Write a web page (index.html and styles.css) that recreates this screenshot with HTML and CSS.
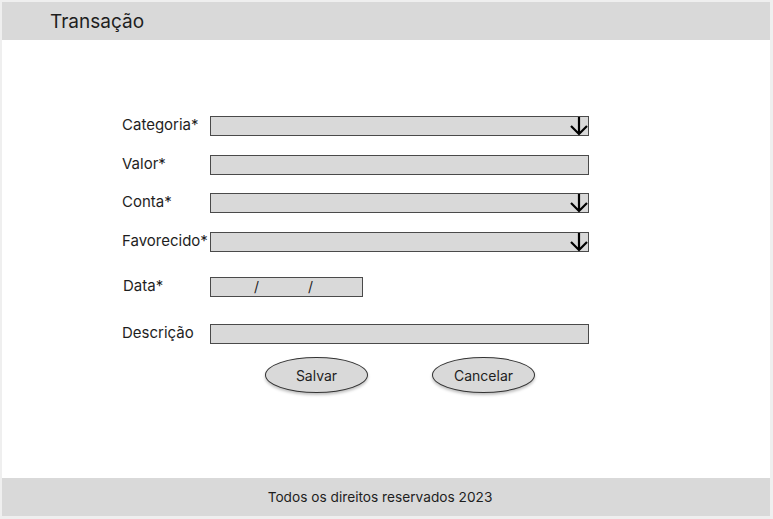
FILE: index.html
```html
<!DOCTYPE html>
<html lang="pt-BR">
<head>
    <meta charset="UTF-8">
    <meta name="viewport" content="width=device-width, initial-scale=1.0">
    <title>Transação</title>
    <link rel="stylesheet" href="styles.css">
</head>
<body>
    <div class="page">
        <!-- Header -->
        <div class="header">
            <h1>Transação</h1>
        </div>

        <!-- Form -->
        <div class="main-content">
            <form class="form">
                <div class="row row-categoria">
                    <label>Categoria*</label>
                    <div class="field select">
                        <svg class="arrow" width="20" height="20" viewBox="0 0 20 20"><path d="M10 1V18M2 10L10 18L18 10" fill="none" stroke="#000" stroke-width="2.2"/></svg>
                    </div>
                </div>
                <div class="row row-valor">
                    <label>Valor*</label>
                    <div class="field"></div>
                </div>
                <div class="row row-conta">
                    <label>Conta*</label>
                    <div class="field select">
                        <svg class="arrow" width="20" height="20" viewBox="0 0 20 20"><path d="M10 1V18M2 10L10 18L18 10" fill="none" stroke="#000" stroke-width="2.2"/></svg>
                    </div>
                </div>
                <div class="row row-favorecido">
                    <label>Favorecido*</label>
                    <div class="field select">
                        <svg class="arrow" width="20" height="20" viewBox="0 0 20 20"><path d="M10 1V18M2 10L10 18L18 10" fill="none" stroke="#000" stroke-width="2.2"/></svg>
                    </div>
                </div>
                <div class="row row-data">
                    <label class="label-data">Data*</label>
                    <div class="field date">
                        <span class="slash slash-1">/</span>
                        <span class="slash slash-2">/</span>
                    </div>
                </div>
                <div class="row row-descricao">
                    <label>Descrição</label>
                    <div class="field"></div>
                </div>
                <div class="buttons">
                    <button type="button" class="btn">Salvar</button>
                    <button type="button" class="btn">Cancelar</button>
                </div>
            </form>
        </div>

        <!-- Footer -->
        <div class="footer">
            <p>Todos os direitos reservados 2023</p>
        </div>
    </div>
</body>
</html>
```

FILE: styles.css
```css
/* Basic reset */
* {
    margin: 0;
    padding: 0;
    box-sizing: border-box;
}

body {
    font-family: Inter, "Noto Sans", sans-serif;
    background-color: #efefef;
    color: #1e1e1e;
    width: 773px;
    height: 519px;
    padding: 2px 3px 3px 2px;
}

.page {
    background-color: white;
    height: 514px;
    display: flex;
    flex-direction: column;
}

/* Header */
.header {
    height: 38px;
    background-color: #d9d9d9;
    display: flex;
    align-items: center;
    padding-left: 48px;
}

.header h1 {
    font-size: 19px;
    font-weight: normal;
    color: #1e1e1e;
}

/* Form */
.main-content {
    flex: 1;
    padding-left: 120px;
}

.form {
    display: flex;
    flex-direction: column;
}

.row {
    display: flex;
    align-items: center;
    height: 20px;
}

.row label {
    width: 88px;
    font-size: 15px;
    white-space: nowrap;
    margin-top: -3px;
}

.row-categoria { margin-top: 76px; }
.row-valor { margin-top: 19px; }
.row-conta { margin-top: 18px; }
.row-favorecido { margin-top: 19px; }
.row-data { margin-top: 25px; }
.row-descricao { margin-top: 27px; }

.label-data {
    padding-left: 1px;
}

.field {
    width: 379px;
    height: 20px;
    background-color: #d9d9d9;
    border: 1px solid #4a4a4a;
    position: relative;
    display: flex;
    align-items: center;
    justify-content: flex-end;
}

.arrow {
    margin-right: -1px;
}

.field.date {
    width: 153px;
    justify-content: flex-start;
    font-size: 14px;
}

.slash {
    position: absolute;
    top: 0;
}

.slash-1 { left: 43px; }
.slash-2 { left: 97px; }

/* Buttons */
.buttons {
    display: flex;
    gap: 64px;
    margin-top: 13px;
    padding-left: 143px;
}

.btn {
    width: 103px;
    height: 36px;
    border-radius: 50%;
    border: 1px solid #333;
    background-color: #d9d9d9;
    font-family: Inter, "Noto Sans", sans-serif;
    font-size: 14px;
    color: #1e1e1e;
    box-shadow: 0 2px 3px rgba(0, 0, 0, 0.25);
}

/* Footer */
.footer {
    height: 38px;
    background-color: #d9d9d9;
    display: flex;
    align-items: center;
    justify-content: center;
    font-size: 13.7px;
    color: #1e1e1e;
    padding-right: 12px;
}
```
